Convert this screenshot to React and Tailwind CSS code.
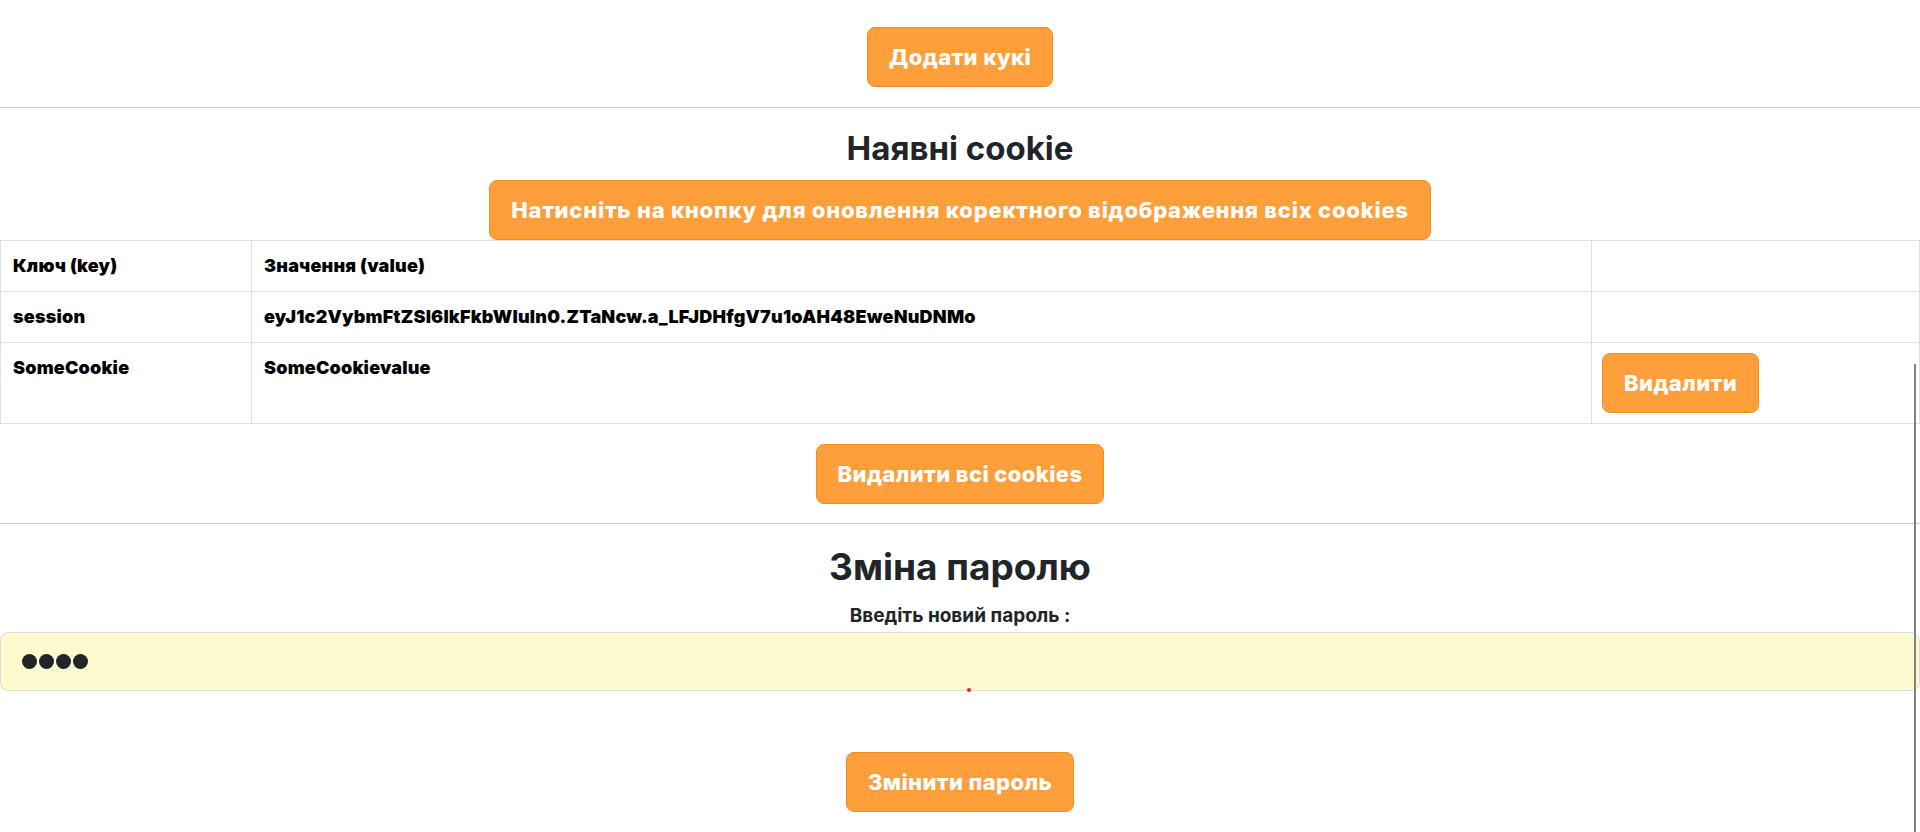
import React from "react";

function OrangeButton({ children, className = "" }) {
  return (
    <button
      type="button"
      className={
        "h-[60px] px-[21px] rounded-[8px] bg-[#ff9f3b] border border-[#f58d1d] text-white font-extrabold text-[22px] leading-none whitespace-nowrap " +
        className
      }
    >
      {children}
    </button>
  );
}

const cell = "border border-[#dee2e6] px-[12px] py-[12px] leading-[26px] align-top";

export default function App() {
  return (
    <div className="relative w-[1920px] h-[832px] overflow-hidden bg-white font-['Inter',sans-serif] text-[#212529]">
      <div className="flex justify-center pt-[27px] pb-[20px]">
        <OrangeButton className="tracking-[0.4px]">Додати кукі</OrangeButton>
      </div>
      <div className="h-px bg-[#cccccc]" />

      <h2 className="text-center font-bold text-[33px] leading-[40px] mt-[20px] mb-[12px]">
        Наявні cookie
      </h2>
      <div className="flex justify-center">
        <OrangeButton className="h-[59px] tracking-[0.75px]">
          Натисніть на кнопку для оновлення коректного відображення всіх cookies
        </OrangeButton>
      </div>

      <table className="w-[1920px] table-fixed border-collapse text-black text-[18px] font-black tracking-[0.2px]">
        <colgroup>
          <col className="w-[251px]" />
          <col className="w-[1340px]" />
          <col />
        </colgroup>
        <tbody>
          <tr>
            <td className={cell}>Ключ (key)</td>
            <td className={cell}>Значення (value)</td>
            <td className={cell}></td>
          </tr>
          <tr>
            <td className={cell}>session</td>
            <td className={cell}>eyJ1c2VybmFtZSI6IkFkbWluIn0.ZTaNcw.a_LFJDHfgV7u1oAH48EweNuDNMo</td>
            <td className={cell}></td>
          </tr>
          <tr>
            <td className={cell}>SomeCookie</td>
            <td className={cell}>SomeCookievalue</td>
            <td className="border border-[#dee2e6] px-[10px] py-[10px] align-top tracking-normal">
              <OrangeButton className="tracking-[0.4px]">Видалити</OrangeButton>
            </td>
          </tr>
        </tbody>
      </table>

      <div className="flex justify-center pt-[20px] pb-[19px]">
        <OrangeButton className="h-[59px] tracking-[0.4px]">Видалити всі cookies</OrangeButton>
      </div>
      <div className="h-px bg-[#cccccc]" />

      <h2 className="text-center font-bold text-[37px] leading-[44px] mt-[21px]">Зміна паролю</h2>
      <p className="text-center font-bold text-[19px] leading-[24px] mt-[15px] mb-[4px]">Введіть новий пароль :</p>
      <div className="relative h-[59px] w-full rounded-[8px] border border-[#dddddd] bg-[#fffacd] flex items-center pl-[21px] gap-[2px]">
        <span className="w-[15px] h-[15px] rounded-full bg-[#212529]" />
        <span className="w-[15px] h-[15px] rounded-full bg-[#212529]" />
        <span className="w-[15px] h-[15px] rounded-full bg-[#212529]" />
        <span className="w-[15px] h-[15px] rounded-full bg-[#212529]" />
        <span className="absolute left-[966px] bottom-[-2px] w-[4px] h-[4px] rounded-full bg-[#e8202a]" />
      </div>

      <div className="flex justify-center pt-[61px] pb-[20px]">
        <OrangeButton className="tracking-[0.4px]">Змінити пароль</OrangeButton>
      </div>
      <div className="h-px bg-[#cccccc]" />

      <div className="absolute left-[1914px] top-[364px] w-[2px] h-[468px] bg-[#808080]" />
    </div>
  );
}
